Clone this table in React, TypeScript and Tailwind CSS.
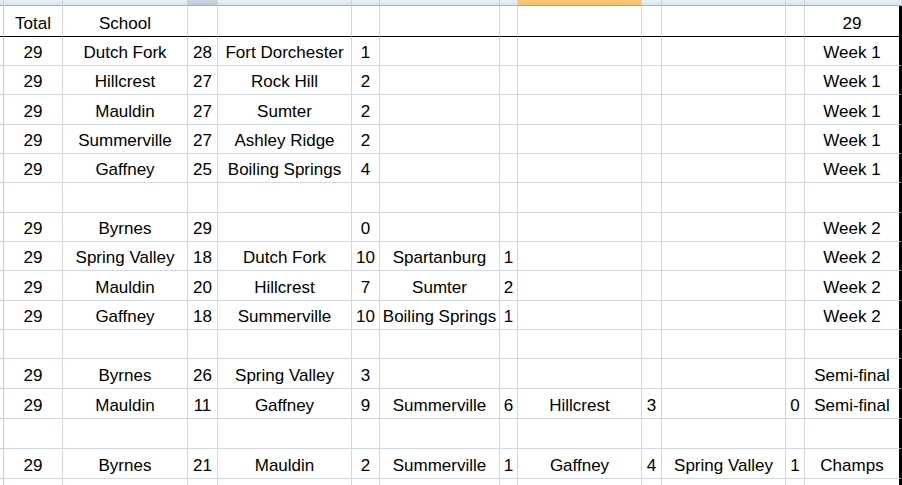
const cols =
  "grid grid-cols-[4px_59px_125px_30px_134px_28px_120px_18px_124px_20px_124px_19px_97px]";

// each row: 12 visible cells, height in px (incl. bottom gridline)
const rows: { h: string; cells: string[] }[] = [
  { h: "h-[29px]", cells: ["29", "Dutch Fork", "28", "Fort Dorchester", "1", "", "", "", "", "", "", "Week 1"] },
  { h: "h-[29px]", cells: ["29", "Hillcrest", "27", "Rock Hill", "2", "", "", "", "", "", "", "Week 1"] },
  { h: "h-[30px]", cells: ["29", "Mauldin", "27", "Sumter", "2", "", "", "", "", "", "", "Week 1"] },
  { h: "h-[29px]", cells: ["29", "Summerville", "27", "Ashley Ridge", "2", "", "", "", "", "", "", "Week 1"] },
  { h: "h-[29px]", cells: ["29", "Gaffney", "25", "Boiling Springs", "4", "", "", "", "", "", "", "Week 1"] },
  { h: "h-[30px]", cells: ["", "", "", "", "", "", "", "", "", "", "", ""] },
  { h: "h-[29px]", cells: ["29", "Byrnes", "29", "", "0", "", "", "", "", "", "", "Week 2"] },
  { h: "h-[29px]", cells: ["29", "Spring Valley", "18", "Dutch Fork", "10", "Spartanburg", "1", "", "", "", "", "Week 2"] },
  { h: "h-[30px]", cells: ["29", "Mauldin", "20", "Hillcrest", "7", "Sumter", "2", "", "", "", "", "Week 2"] },
  { h: "h-[29px]", cells: ["29", "Gaffney", "18", "Summerville", "10", "Boiling Springs", "1", "", "", "", "", "Week 2"] },
  { h: "h-[29px]", cells: ["", "", "", "", "", "", "", "", "", "", "", ""] },
  { h: "h-[30px]", cells: ["29", "Byrnes", "26", "Spring Valley", "3", "", "", "", "", "", "", "Semi-final"] },
  { h: "h-[30px]", cells: ["29", "Mauldin", "11", "Gaffney", "9", "Summerville", "6", "Hillcrest", "3", "", "0", "Semi-final"] },
  { h: "h-[30px]", cells: ["", "", "", "", "", "", "", "", "", "", "", ""] },
  { h: "h-[30px]", cells: ["29", "Byrnes", "21", "Mauldin", "2", "Summerville", "1", "Gaffney", "4", "Spring Valley", "1", "Champs"] },
  { h: "h-[30px]", cells: ["", "", "", "", "", "", "", "", "", "", "", ""] },
];

function HeaderStrip() {
  const strip = Array.from({ length: 13 });
  return (
    <div className={cols + " h-[6px]"}>
      {strip.map((_, i) => {
        let bg = "bg-gradient-to-b from-[#e9eff7] to-[#dbe4ef] border-b-[#9eb6ce]";
        if (i === 3) bg = "bg-gradient-to-b from-[#cdd6e2] to-[#bec9d8] border-b-[#9eb6ce]";
        if (i === 8) bg = "bg-gradient-to-b from-[#f8ca7c] to-[#f4c06c] border-b-[#f29436]";
        return <div key={i} className={"border-b border-r border-r-[#c5d3e3] " + bg} />;
      })}
    </div>
  );
}

function Cell({ text, last, head }: { text: string; last?: boolean; head?: boolean }) {
  return (
    <div
      className={
        "flex items-end justify-center whitespace-nowrap overflow-hidden pb-[3px] text-[17px] leading-[19px] text-black " +
        (head ? "border-b border-b-black " : "border-b border-b-[#d0d7e5] ") +
        (last ? "border-r-[3px] border-r-black" : "border-r border-r-[#d0d7e5]")
      }
    >
      {text}
    </div>
  );
}

function Gutter({ head }: { head?: boolean }) {
  return (
    <div
      className={
        "bg-white border-r border-r-[#c3cfe0] " +
        (head ? "border-b border-b-black" : "border-b border-b-[#c3cfe0]")
      }
    />
  );
}

export default function App() {
  const header = ["Total", "School", "", "", "", "", "", "", "", "", "", "29"];
  return (
    <div
      className="w-[902px] h-[485px] overflow-hidden bg-white"
      style={{ fontFamily: '"Liberation Sans", Arial, sans-serif' }}
    >
      <HeaderStrip />
      <div className={cols + " h-[31px]"}>
        <Gutter head />
        {header.map((t, i) => (
          <Cell key={i} text={t} head last={i === 11} />
        ))}
      </div>
      {rows.map((r, ri) => (
        <div key={ri} className={cols + " " + r.h}>
          <Gutter />
          {r.cells.map((t, i) => (
            <Cell key={i} text={t} last={i === 11} />
          ))}
        </div>
      ))}
    </div>
  );
}
